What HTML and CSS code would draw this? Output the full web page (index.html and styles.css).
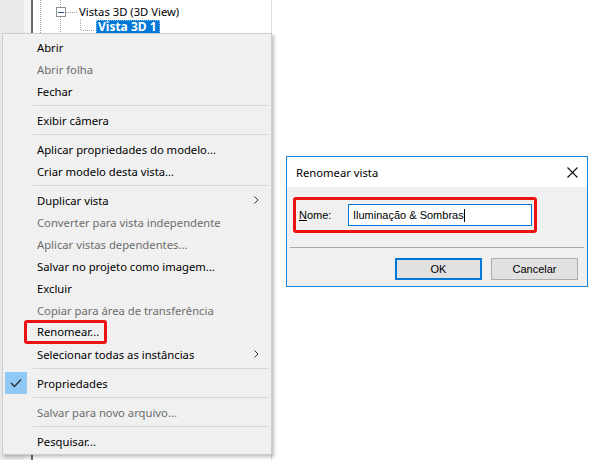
FILE: index.html
```html
<!DOCTYPE html>
<html lang="pt-BR">
<head>
    <meta charset="UTF-8">
    <title>Renomear vista</title>
    <link rel="stylesheet" href="styles.css">
</head>
<body>
    <div class="desk">
        <!-- project browser behind the popup -->
        <div class="panel">
            <div class="rail"></div>
            <div class="rail-gap"></div>
            <div class="rail-edge"></div>
            <div class="tree">
                <svg class="tree-lines" width="238" height="33">
                    <g stroke="#a0a0a0" stroke-width="1" stroke-dasharray="1 1">
                        <line x1="7.5" y1="0" x2="7.5" y2="33"/>
                        <line x1="27.5" y1="0" x2="27.5" y2="7"/>
                        <line x1="27.5" y1="17" x2="27.5" y2="33"/>
                        <line x1="33" y1="12.5" x2="44" y2="12.5"/>
                        <line x1="47.5" y1="19" x2="47.5" y2="31"/>
                        <line x1="48" y1="30.5" x2="62" y2="30.5"/>
                    </g>
                    <rect x="23.5" y="7.5" width="9" height="9" fill="#fff" stroke="#8f8f8f"/>
                    <line x1="25" y1="12.5" x2="31" y2="12.5" stroke="#2a4f8f"/>
                </svg>
                <div class="node node-top">Vistas 3D (3D View)</div>
                <div class="node node-sel"><span>Vista 3D 1</span></div>
            </div>
        </div>

        <!-- context menu -->
        <ul class="menu">
            <li class="item">Abrir</li>
            <li class="item off">Abrir folha</li>
            <li class="item">Fechar</li>
            <li class="sep"></li>
            <li class="item">Exibir câmera</li>
            <li class="sep"></li>
            <li class="item">Aplicar propriedades do modelo...</li>
            <li class="item">Criar modelo desta vista...</li>
            <li class="sep"></li>
            <li class="item sub">Duplicar vista
                <svg class="arrow" width="5" height="8"><path d="M0.5 0.5 L4 4 L0.5 7.5" fill="none" stroke="#333"/></svg>
            </li>
            <li class="item off">Converter para vista independente</li>
            <li class="item off">Aplicar vistas dependentes...</li>
            <li class="item">Salvar no projeto como imagem...</li>
            <li class="item">Excluir</li>
            <li class="item off">Copiar para área de transferência</li>
            <li class="item"><span class="mark">Renomear...</span></li>
            <li class="item sub">Selecionar todas as instâncias
                <svg class="arrow" width="5" height="8"><path d="M0.5 0.5 L4 4 L0.5 7.5" fill="none" stroke="#333"/></svg>
            </li>
            <li class="sep"></li>
            <li class="item checked">
                <span class="check">
                    <svg width="12" height="10"><path d="M1 5 L4.5 8.5 L11 1.5" fill="none" stroke="#2b2b2b" stroke-width="1.3"/></svg>
                </span>
                Propriedades
            </li>
            <li class="sep"></li>
            <li class="item off">Salvar para novo arquivo...</li>
            <li class="sep"></li>
            <li class="item">Pesquisar...</li>
        </ul>

        <!-- rename dialog -->
        <div class="dialog">
            <div class="titlebar">
                <span>Renomear vista</span>
                <svg class="close" width="11" height="11"><path d="M0.5 0.5 L10.5 10.5 M10.5 0.5 L0.5 10.5" stroke="#111" stroke-width="1.1"/></svg>
            </div>
            <div class="dialog-body">
                <div class="field mark">
                    <label for="viewName"><u>N</u>ome:</label>
                    <div class="input" id="viewName">Iluminação &amp; Sombras<span class="caret"></span></div>
                </div>
                <div class="rule"></div>
                <div class="buttons">
                    <button class="btn default">OK</button>
                    <button class="btn">Cancelar</button>
                </div>
            </div>
        </div>
    </div>
</body>
</html>
```

FILE: styles.css
```css
body {
    margin: 0;
    font-family: "Noto Sans", "Open Sans", sans-serif;
    font-size: 11.25px;
    color: #000;
    background-color: #fff;
}

.desk {
    position: relative;
    width: 595px;
    height: 460px;
    overflow: hidden;
}

/* Project browser */
.panel {
    display: flex;
    width: 272px;
    height: 460px;
}

.rail {
    width: 24px;
    background-color: #e9e9e9;
}

.rail-gap {
    width: 7px;
    background-color: #f4f4f4;
}

.rail-edge {
    width: 2px;
    background-color: #6a6a6a;
}

.tree {
    position: relative;
    flex: 1;
    border-right: 1px solid #dcdcdc;
}

.tree-lines {
    position: absolute;
    left: 0;
    top: 0;
}

.node {
    position: relative;
    height: 14px;
    line-height: 14px;
    white-space: nowrap;
}

.node-top {
    padding-left: 46px;
    padding-top: 5px;
}

.node-sel {
    padding-left: 63px;
    padding-top: 1px;
}

.node-sel span {
    display: inline-block;
    padding: 0 3px 0 2px;
    background-color: #0078d7;
    color: #fff;
    font-weight: bold;
    font-size: 12px;
    outline: 1px dotted #8cc4f0;
    outline-offset: -1px;
}

/* Context menu */
.menu {
    position: absolute;
    left: 2px;
    top: 33px;
    width: 268px;
    margin: 0;
    padding: 2px 0;
    list-style: none;
    background-color: #f0f0f0;
    border: 1px solid #cccccc;
    box-shadow: 2px 2px 3px rgba(0, 0, 0, 0.25);
}

.item {
    position: relative;
    display: flex;
    align-items: center;
    height: 22px;
    padding-left: 34px;
    white-space: nowrap;
}

.item.off {
    color: #6d6d6d;
}

.item .arrow {
    position: absolute;
    right: 12px;
    top: 7px;
}

.sep {
    height: 1px;
    margin: 3px 2px 3px 30px;
    background-color: #d7d7d7;
}

.check {
    position: absolute;
    left: 2px;
    top: 0;
    width: 22px;
    height: 22px;
    display: flex;
    align-items: center;
    justify-content: center;
    background-color: #90c8f6;
}

.mark {
    border: 3px solid #ee1111;
    border-radius: 3px;
}

.item .mark {
    margin-left: -13px;
    padding: 1px 5px 2px 10px;
}

/* Dialog */
.dialog {
    position: absolute;
    left: 286px;
    top: 156px;
    width: 300px;
    border: 1px solid #1883d7;
    background-color: #f0f0f0;
}

.titlebar {
    display: flex;
    align-items: center;
    justify-content: space-between;
    height: 30px;
    padding: 0 9px 0 9px;
    background-color: #fff;
}

.dialog-body {
    padding: 10px 9px 6px 6px;
    font-family: "Liberation Sans", Arial, sans-serif;
    font-size: 11px;
}

.field {
    display: flex;
    align-items: center;
    width: 233px;
    padding: 4px 2px 4px 3px;
}

.field label {
    width: 49px;
}

.input {
    flex: 1;
    height: 20px;
    line-height: 20px;
    padding-left: 4px;
    background-color: #fff;
    border: 1px solid #0078d7;
    white-space: nowrap;
}

.caret {
    display: inline-block;
    width: 1px;
    height: 13px;
    vertical-align: -3px;
    background-color: #000;
}

.rule {
    height: 1px;
    margin: 14px -6px 10px -3px;
    background-color: #a8a8a8;
}

.buttons {
    display: flex;
    justify-content: flex-end;
    gap: 9px;
}

.btn {
    width: 87px;
    height: 22px;
    padding: 0;
    font: inherit;
    background-color: #e1e1e1;
    border: 1px solid #adadad;
}

.btn.default {
    border: 2px solid #0078d7;
}
```
